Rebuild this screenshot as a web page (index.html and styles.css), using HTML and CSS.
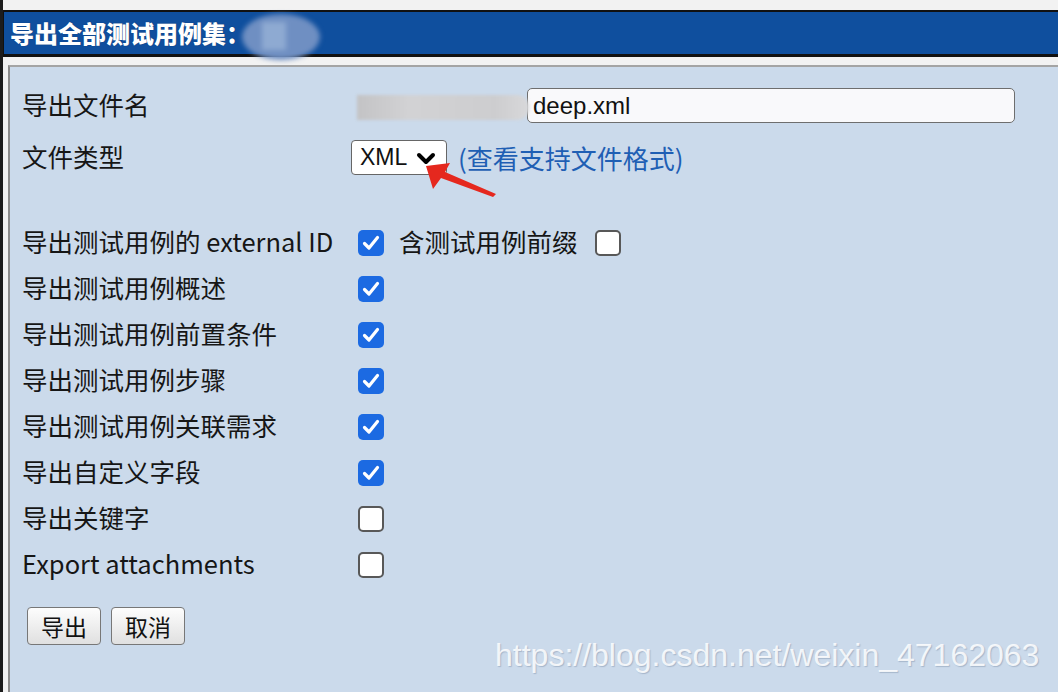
FILE: index.html
```html
<!DOCTYPE html>
<html lang="zh-CN">
<head>
    <meta charset="UTF-8">
    <meta name="viewport" content="width=device-width, initial-scale=1.0">
    <title>导出全部测试用例集</title>
    <link rel="stylesheet" href="styles.css">
</head>
<body>
    <div class="frame">
        <div class="title-bar">
            <h1>导出全部测试用例集：</h1>
            <span class="blur-name"><span class="blur-band"></span></span>
        </div>

        <div class="panel">
            <div class="row row-file">
                <label>导出文件名</label>
                <span class="blur-path"></span>
                <input type="text" class="file-input" value="deep.xml">
            </div>

            <div class="row row-type">
                <label>文件类型</label>
                <span class="select">XML
                    <svg class="chevron" width="20" height="14" viewBox="0 0 20 14"><polyline points="3,3 10,10 17,3" fill="none" stroke="#000" stroke-width="4" stroke-linecap="round" stroke-linejoin="round"/></svg>
                </span>
                <a class="formats-link" href="#">(查看支持文件格式)</a>
            </div>

            <div class="checks">
                <div class="row check-row">
                    <label>导出测试用例的 external ID</label>
                    <span class="cb checked"><svg width="26" height="26" viewBox="0 0 26 26"><polyline points="6.5,13.5 11,18 19.5,7.5" fill="none" stroke="#fff" stroke-width="3.2" stroke-linecap="round" stroke-linejoin="round"/></svg></span>
                    <span class="inline-label">含测试用例前缀</span>
                    <span class="cb"></span>
                </div>
                <div class="row check-row">
                    <label>导出测试用例概述</label>
                    <span class="cb checked"><svg width="26" height="26" viewBox="0 0 26 26"><polyline points="6.5,13.5 11,18 19.5,7.5" fill="none" stroke="#fff" stroke-width="3.2" stroke-linecap="round" stroke-linejoin="round"/></svg></span>
                </div>
                <div class="row check-row">
                    <label>导出测试用例前置条件</label>
                    <span class="cb checked"><svg width="26" height="26" viewBox="0 0 26 26"><polyline points="6.5,13.5 11,18 19.5,7.5" fill="none" stroke="#fff" stroke-width="3.2" stroke-linecap="round" stroke-linejoin="round"/></svg></span>
                </div>
                <div class="row check-row">
                    <label>导出测试用例步骤</label>
                    <span class="cb checked"><svg width="26" height="26" viewBox="0 0 26 26"><polyline points="6.5,13.5 11,18 19.5,7.5" fill="none" stroke="#fff" stroke-width="3.2" stroke-linecap="round" stroke-linejoin="round"/></svg></span>
                </div>
                <div class="row check-row">
                    <label>导出测试用例关联需求</label>
                    <span class="cb checked"><svg width="26" height="26" viewBox="0 0 26 26"><polyline points="6.5,13.5 11,18 19.5,7.5" fill="none" stroke="#fff" stroke-width="3.2" stroke-linecap="round" stroke-linejoin="round"/></svg></span>
                </div>
                <div class="row check-row">
                    <label>导出自定义字段</label>
                    <span class="cb checked"><svg width="26" height="26" viewBox="0 0 26 26"><polyline points="6.5,13.5 11,18 19.5,7.5" fill="none" stroke="#fff" stroke-width="3.2" stroke-linecap="round" stroke-linejoin="round"/></svg></span>
                </div>
                <div class="row check-row">
                    <label>导出关键字</label>
                    <span class="cb"></span>
                </div>
                <div class="row check-row">
                    <label>Export attachments</label>
                    <span class="cb"></span>
                </div>
            </div>

            <div class="buttons">
                <button class="btn">导出</button>
                <button class="btn">取消</button>
            </div>

            <!-- annotation arrow pointing at the select -->
            <svg class="red-arrow" width="84" height="44" viewBox="0 0 84 44"><polygon points="6,7 30,4 25,13 76,35 73,38 21,19 13,30" fill="#e5281e"/></svg>

            <div class="watermark">https://blog.csdn.net/weixin_47162063</div>
        </div>
    </div>
</body>
</html>
```

FILE: styles.css
```css
body {
    margin: 0;
    background: #f2f2f2;
    font-family: "Noto Sans CJK SC", "Noto Sans", sans-serif;
    color: #161616;
    overflow: hidden;
}
.frame {
    border-left: 3px solid #1c1c1c;
    padding-top: 10px;
    height: 682px;
}
.title-bar {
    position: relative;
    height: 42px;
    background: #0f4f9e;
    border-top: 2px solid #111;
    border-bottom: 3px solid #111;
    border-left: 1px solid #111;
    display: flex;
    align-items: center;
    padding-left: 6px;
}
.title-bar h1 {
    margin: 0;
    font-size: 24px;
    font-weight: 900;
    color: #fff;
    line-height: 1;
    letter-spacing: 0;
    text-shadow: 0 0 1px #0a2f66;
}
.blur-name {
    position: absolute;
    left: 238px;
    top: 2px;
    width: 78px;
    height: 46px;
    border-radius: 50%;
    background: #6f8fc2;
    filter: blur(2.5px);
}
.blur-band {
    position: absolute;
    left: 20px;
    top: 8px;
    width: 24px;
    height: 28px;
    background: #8eaad2;
}
.panel {
    position: relative;
    margin-top: 8px;
    margin-left: 5px;
    border-top: 2px solid #a4a4a4;
    border-left: 2px solid #8c8c8c;
    background: #cbdaeb;
    height: 640px;
    padding: 21px 0 0 12px;
    box-sizing: border-box;
}
.row {
    display: flex;
    align-items: center;
}
.row label {
    width: 329px;
    flex: none;
    font-size: 25.5px;
    line-height: 1.2;
    margin-top: -3px;
}
.row-file {
    height: 35px;
}
.blur-path {
    position: relative;
    z-index: 1;
    width: 172px;
    height: 25px;
    margin: 4px -2px 0 6px;
    background: linear-gradient(90deg, #c3c3c5, #d2d2d4 30%, #cdcdcf 80%, #d8d8da);
    filter: blur(1.5px);
    border-radius: 0 12px 12px 0;
}
.file-input {
    width: 488px;
    height: 35px;
    box-sizing: border-box;
    border: 1px solid #6e6e6e;
    border-radius: 5px;
    background: #f9f9fb;
    padding: 0 0 0 5px;
    font-family: "Liberation Sans", Arial, sans-serif;
    font-size: 24px;
    color: #111;
}
.row-type {
    height: 35px;
    margin-top: 17px;
}
.select {
    width: 96px;
    height: 35px;
    box-sizing: border-box;
    border: 1px solid #666;
    border-radius: 4px;
    background: #fff;
    display: flex;
    align-items: center;
    padding-left: 8px;
    font-family: "Liberation Sans", Arial, sans-serif;
    font-size: 23px;
    color: #111;
}
.chevron {
    margin-left: 9px;
    margin-top: 2px;
}
.formats-link {
    margin-left: 11px;
    font-size: 26px;
    color: #1f5fb4;
    text-decoration: none;
}
.checks {
    margin-top: 45px;
}
.check-row {
    height: 46px;
}
.cb {
    width: 26px;
    height: 26px;
    box-sizing: border-box;
    margin-left: 7px;
    border: 2px solid #585858;
    border-radius: 5px;
    background: #fff;
    flex: none;
}
.cb.checked {
    border: none;
    background: #1c6ae2;
}
.cb svg {
    display: block;
}
.inline-label {
    margin-left: 15px;
    margin-right: 10px;
    margin-top: -3px;
    font-size: 25.5px;
    line-height: 1.2;
}
.buttons {
    margin-top: 19px;
    display: flex;
    gap: 10px;
    padding-left: 5px;
}
.btn {
    width: 74px;
    height: 38px;
    border: 1px solid #777;
    border-radius: 4px;
    background: linear-gradient(#fdfdfd, #e0e0e0);
    font-family: "Noto Sans CJK SC", sans-serif;
    font-size: 23px;
    color: #111;
    padding: 0;
    line-height: 1;
}
.red-arrow {
    position: absolute;
    left: 410px;
    top: 92px;
}
.watermark {
    position: absolute;
    left: 485px;
    top: 572px;
    font-family: "Liberation Sans", Arial, sans-serif;
    font-size: 32px;
    line-height: 1;
    color: rgba(255, 255, 255, 0.85);
    text-shadow: 1px 1px 1px rgba(60, 80, 110, 0.25);
    white-space: nowrap;
}
```
